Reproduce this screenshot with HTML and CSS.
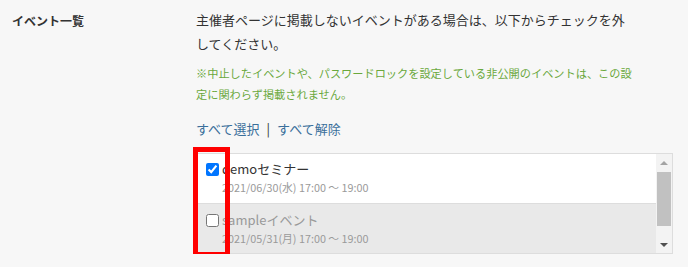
FILE: index.html
```html
<!DOCTYPE html>
<html lang="ja">
<head>
  <meta charset="UTF-8">
  <title>イベント一覧</title>
  <link rel="stylesheet" href="styles.css">
</head>
<body>

<div class="setting-row">
  <div class="setting-label">イベント一覧</div>

  <div class="setting-body">
    <p class="desc">主催者ページに掲載しないイベントがある場合は、以下からチェックを外してください。</p>
    <p class="note">※中止したイベントや、パスワードロックを設定している非公開のイベントは、この設定に関わらず掲載されません。</p>

    <div class="select-links">
      <a href="#">すべて選択</a><span class="sep">|</span><a href="#">すべて解除</a>
    </div>

    <div class="event-list">
      <div class="event-rows">
        <label class="event-row">
          <input type="checkbox" checked>
          <div class="event-info">
            <div class="event-title">demoセミナー</div>
            <div class="event-date">2021/06/30(水) 17:00 ～ 19:00</div>
          </div>
        </label>
        <label class="event-row off">
          <input type="checkbox">
          <div class="event-info">
            <div class="event-title">sampleイベント</div>
            <div class="event-date">2021/05/31(月) 17:00 ～ 19:00</div>
          </div>
        </label>
      </div>

      <div class="scrollbar">
        <div class="scroll-btn up"></div>
        <div class="scroll-track"><div class="scroll-thumb"></div></div>
        <div class="scroll-btn down"></div>
      </div>

      <div class="highlight"></div>
    </div>
  </div>
</div>

</body>
</html>
```

FILE: styles.css
```css
body {
  font-family: "Noto Sans CJK JP", "Noto Sans", sans-serif;
  margin: 0;
  padding: 0;
  background-color: #f7f7f7;
  color: #333;
}

.setting-row {
  display: flex;
  padding: 8px 0 0 12px;
}

.setting-label {
  width: 184px;
  font-size: 12px;
  font-weight: bold;
  line-height: 26px;
  color: #333;
}

.setting-body {
  width: 477px;
}

.desc {
  margin: 0;
  width: 435px;
  font-size: 13px;
  line-height: 24px;
}

.note {
  margin: 7px 0 0;
  width: 446px;
  font-size: 11.2px;
  line-height: 21px;
  color: #6aa83c;
}

.select-links {
  margin-top: 14px;
  font-size: 13px;
  line-height: 20px;
}

.select-links a {
  color: #3a6f9b;
  text-decoration: none;
}

.select-links .sep {
  margin: 0 7px;
  color: #333;
}

.event-list {
  position: relative;
  display: flex;
  margin-top: 14px;
  height: 99px;
  border: 1px solid #ddd;
  background-color: #fff;
}

.event-rows {
  flex: 1;
  overflow: hidden;
}

.event-row {
  display: flex;
  align-items: flex-start;
  height: 50px;
  box-sizing: border-box;
  padding: 6px 0 0 9px;
  border-bottom: 1px solid #ddd;
  cursor: pointer;
}

.event-row.off {
  background-color: #e9e9e9;
  border-bottom: none;
  padding-top: 7px;
}

.event-row input {
  margin: 3px 0 0;
  width: 13px;
  height: 13px;
}

.event-info {
  margin-left: 3px;
}

.event-title {
  font-size: 13px;
  line-height: 18px;
}

.event-date {
  font-size: 10.8px;
  line-height: 18px;
  color: #9a9a9a;
}

.off .event-title {
  color: #999;
}

.scrollbar {
  width: 16px;
  display: flex;
  flex-direction: column;
  background-color: #f3f3f3;
}

.scroll-btn {
  height: 17px;
  display: flex;
  align-items: center;
  justify-content: center;
}

.scroll-btn::before {
  content: "";
  width: 0;
  height: 0;
  border-left: 4px solid transparent;
  border-right: 4px solid transparent;
}

.scroll-btn.up::before {
  border-bottom: 4px solid #a3a3a3;
}

.scroll-btn.down::before {
  border-top: 4px solid #505050;
}

.scroll-track {
  flex: 1;
  padding: 1px 1px 0;
}

.scroll-thumb {
  height: 54px;
  background-color: #c1c1c1;
}

.highlight {
  position: absolute;
  left: -4px;
  top: -7px;
  width: 27px;
  height: 100px;
  border: 5px solid #f00;
  pointer-events: none;
}
```
